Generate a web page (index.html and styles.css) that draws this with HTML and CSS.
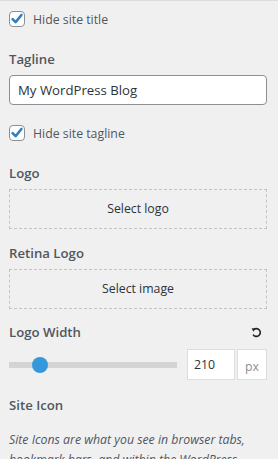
FILE: index.html
```html
<!DOCTYPE html>
<html lang="en">
  <head>
    <meta charset="UTF-8" />
    <title>Site Identity</title>
    <link rel="stylesheet" href="styles.css">
  </head>
  <body>
    <div class="panel">
      <label class="check-row">
        <span class="checkbox">
          <svg viewBox="0 0 16 16" width="16" height="16"><path d="M3.6 8.2 L6.6 11.2 L12.4 4" fill="none" stroke="#2f7fc1" stroke-width="2.6" stroke-linecap="round" stroke-linejoin="round"/></svg>
        </span>
        Hide site title
      </label>

      <div class="control-title tagline-title">Tagline</div>
      <div class="text-input">My WordPress Blog</div>

      <label class="check-row tagline-check">
        <span class="checkbox">
          <svg viewBox="0 0 16 16" width="16" height="16"><path d="M3.6 8.2 L6.6 11.2 L12.4 4" fill="none" stroke="#2f7fc1" stroke-width="2.6" stroke-linecap="round" stroke-linejoin="round"/></svg>
        </span>
        Hide site tagline
      </label>

      <div class="control-title logo-title">Logo</div>
      <div class="placeholder">Select logo</div>

      <div class="control-title">Retina Logo</div>
      <div class="placeholder">Select image</div>

      <div class="control-title width-title">
        <span>Logo Width</span>
        <svg class="reset" viewBox="0 0 11 11" width="11" height="11"><path d="M2.6 2.8 A3.9 3.9 0 1 1 2.1 7.6" fill="none" stroke="#1d2327" stroke-width="1.6"/><path d="M0.6 1.2 L4.2 1.6 L2.4 4.8 Z" fill="#1d2327"/></svg>
      </div>
      <div class="slider-row">
        <div class="track"><span class="thumb"></span></div>
        <div class="number">210</div>
        <div class="unit">px</div>
      </div>

      <div class="control-title icon-title">Site Icon</div>
      <p class="description">Site Icons are what you see in browser tabs, bookmark bars, and within the WordPress mobile apps.</p>
    </div>
  </body>
</html>
```

FILE: styles.css
```css
body {
  margin: 0;
  background: #f0f0f1;
  border-top: 1px solid #dcdcde;
  font-family: "Open Sans", sans-serif;
  color: #50575e;
  overflow: hidden;
}

.panel {
  padding: 10px 11px 0 9px;
}

.check-row {
  display: flex;
  align-items: center;
  gap: 8px;
  font-size: 12.3px;
  height: 16px;
}

.checkbox {
  display: block;
  width: 16px;
  height: 16px;
  box-sizing: border-box;
  border: 1px solid #8c8f94;
  border-radius: 4px;
  background: white;
  position: relative;
}

.checkbox svg {
  position: absolute;
  left: -1px;
  top: -1px;
}

.control-title {
  font-size: 13.2px;
  font-weight: 600;
  line-height: 20px;
  margin-top: 14px;
  margin-bottom: 6px;
}

.tagline-title {
  margin-top: 22px;
}

.text-input {
  height: 30px;
  box-sizing: border-box;
  border: 1px solid #8c8f94;
  border-radius: 4px;
  background: white;
  padding: 0 8px;
  line-height: 28px;
  font-size: 13.2px;
  color: #2c3338;
}

.tagline-check {
  margin-top: 20px;
}

.logo-title {
  margin-top: 22px;
}

.placeholder {
  height: 40px;
  box-sizing: border-box;
  border: 1px dashed #c3c4c7;
  text-align: center;
  line-height: 38px;
  font-size: 12.3px;
  color: #2c3338;
}

.width-title {
  display: flex;
  justify-content: space-between;
  align-items: center;
  margin-top: 13px;
  margin-bottom: 7px;
}

.reset {
  margin-right: 5px;
}

.slider-row {
  display: flex;
  align-items: center;
}

.track {
  flex: 0 0 168px;
  height: 6px;
  background: #d4d4d4;
  position: relative;
  margin-right: 10px;
}

.thumb {
  position: absolute;
  left: 23px;
  top: -5px;
  width: 16px;
  height: 16px;
  border-radius: 50%;
  background: #3498db;
}

.number,
.unit {
  height: 31px;
  box-sizing: border-box;
  border: 1px solid #dddddd;
  background: white;
  line-height: 29px;
  font-size: 12.3px;
}

.number {
  width: 48px;
  padding-left: 6px;
  color: #2c3338;
}

.unit {
  width: 30px;
  margin-left: 2px;
  text-align: center;
  color: #8c8f94;
  line-height: 33px;
}

.icon-title {
  margin-top: 15px;
}

.description {
  margin: 15px 0 0;
  font-size: 12.3px;
  font-style: italic;
  line-height: 20px;
}
```
